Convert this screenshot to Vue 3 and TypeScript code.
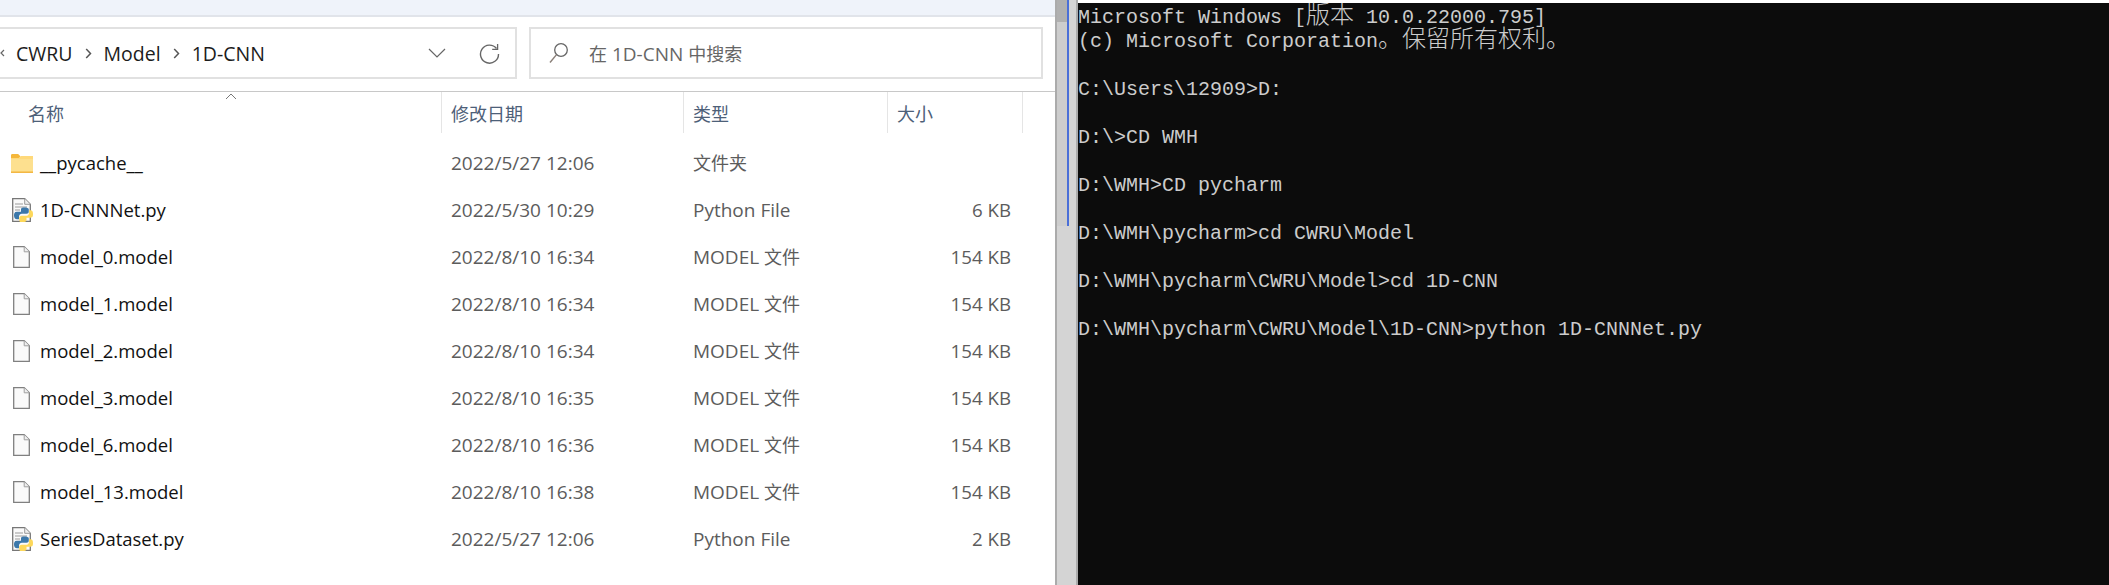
<script setup lang="ts">
interface Row { name: string; date: string; type: string; size: string; icon: 'folder' | 'py' | 'doc' }
const rows: Row[] = [
  { name: '__pycache__', date: '2022/5/27 12:06', type: '文件夹', size: '', icon: 'folder' },
  { name: '1D-CNNNet.py', date: '2022/5/30 10:29', type: 'Python File', size: '6 KB', icon: 'py' },
  { name: 'model_0.model', date: '2022/8/10 16:34', type: 'MODEL 文件', size: '154 KB', icon: 'doc' },
  { name: 'model_1.model', date: '2022/8/10 16:34', type: 'MODEL 文件', size: '154 KB', icon: 'doc' },
  { name: 'model_2.model', date: '2022/8/10 16:34', type: 'MODEL 文件', size: '154 KB', icon: 'doc' },
  { name: 'model_3.model', date: '2022/8/10 16:35', type: 'MODEL 文件', size: '154 KB', icon: 'doc' },
  { name: 'model_6.model', date: '2022/8/10 16:36', type: 'MODEL 文件', size: '154 KB', icon: 'doc' },
  { name: 'model_13.model', date: '2022/8/10 16:38', type: 'MODEL 文件', size: '154 KB', icon: 'doc' },
  { name: 'SeriesDataset.py', date: '2022/5/27 12:06', type: 'Python File', size: '2 KB', icon: 'py' },
]
const crumbs = ['CWRU', 'Model', '1D-CNN']
type Seg = { t: string; cjk?: boolean }
const term: Seg[][] = [
  [{ t: 'Microsoft Windows [' }, { t: '版本', cjk: true }, { t: ' 10.0.22000.795]' }],
  [{ t: '(c) Microsoft Corporation' }, { t: '。保留所有权利。', cjk: true }],
  [],
  [{ t: 'C:\\Users\\12909>D:' }],
  [],
  [{ t: 'D:\\>CD WMH' }],
  [],
  [{ t: 'D:\\WMH>CD pycharm' }],
  [],
  [{ t: 'D:\\WMH\\pycharm>cd CWRU\\Model' }],
  [],
  [{ t: 'D:\\WMH\\pycharm\\CWRU\\Model>cd 1D-CNN' }],
  [],
  [{ t: 'D:\\WMH\\pycharm\\CWRU\\Model\\1D-CNN>python 1D-CNNNet.py' }],
]
function parts(s: string): Seg[] {
  return (s.match(/[\u4e00-\u9fff]+|[^\u4e00-\u9fff]+/g) ?? []).map((t) => ({ t, cjk: /[\u4e00-\u9fff]/.test(t) }))
}
</script>

<template>
  <div class="page">
    <section class="explorer">
      <div class="strip"></div>
      <div class="toolbar">
        <div class="address">
          <svg class="back" width="5" height="8" viewBox="0 0 5 8"><path d="M4 1 1 4l3 3" fill="none" stroke="#666" stroke-width="1.2" /></svg>
          <template v-for="(c, i) in crumbs" :key="c">
            <span class="crumb">{{ c }}</span>
            <svg v-if="i < crumbs.length - 1" class="sep" width="7" height="11" viewBox="0 0 7 11"><path d="M1.2 1 5.5 5.5 1.2 10" fill="none" stroke="#555" stroke-width="1.5" /></svg>
          </template>
          <span class="grow"></span>
          <svg class="chev" width="18" height="10" viewBox="0 0 18 10"><path d="M1 1l8 8 8-8" fill="none" stroke="#666" stroke-width="1.2" /></svg>
          <svg class="refresh" width="21" height="21" viewBox="0 0 21 21"><path d="M17.5 5.5A9 9 0 1 0 19.5 11" fill="none" stroke="#666" stroke-width="1.4" /><path d="M18.6 1v5.4h-5.4" fill="none" stroke="#666" stroke-width="1.3" /></svg>
        </div>
        <div class="search">
          <svg width="20" height="22" viewBox="0 0 20 22"><circle cx="12" cy="8" r="6.3" fill="none" stroke="#666" stroke-width="1.3" /><path d="M7.5 12.6 1 20.5" fill="none" stroke="#8a7f78" stroke-width="1.4" /></svg>
          <span><span v-for="(p, k) in parts('在 1D-CNN 中搜索')" :key="k" :class="{ zh: p.cjk }">{{ p.t }}</span></span>
        </div>
      </div>
      <div class="header">
        <div class="hcell hname">名称
          <svg class="sort" width="12" height="7" viewBox="0 0 12 7"><path d="M1 6l5-5 5 5" fill="none" stroke="#777" stroke-width="1" /></svg>
        </div>
        <div class="hcell">修改日期</div>
        <div class="hcell">类型</div>
        <div class="hcell">大小</div>
      </div>
      <div class="rows">
        <div v-for="r in rows" :key="r.name" class="row">
          <div class="name">
            <span class="ico">
              <svg v-if="r.icon === 'folder'" width="22" height="20" viewBox="0 0 23 20" preserveAspectRatio="none">
                <path d="M0 2.5C0 1.5.5 1 1.5 1h6L10 3.5 8 6H0z" fill="#f5b73a" />
                <path d="M0 5h8l2.5-2H23v16.5H0z" fill="#ffd97a" />
                <path d="M0 6h23v12.5H0z" fill="#fde08f" />
                <path d="M0 18.5h23V20H0z" fill="#f3b744" />
              </svg>
              <svg v-else-if="r.icon === 'py'" width="21" height="24" viewBox="0 0 21 24">
                <path d="M.7.7h12l5.6 5.6v17H.7z" fill="#fafafa" stroke="#777" stroke-width="1.3" />
                <path d="M12.7.7v5.6h5.6" fill="#eee" stroke="#999" />
                <path d="M3 6h8M3 9h12M3 12h5M3 15h4M3 18h4" stroke="#9a9a9a" stroke-width="1" />
                <path d="M10 9.5c-3 0-3 1.3-3 3v1.3H2.9c-2.4 0-2.9 2-2.9 3.6 0 2.4 1 3.8 3 3.8h2v-2.6c0-1.8 1.3-2.9 3-2.9h4.5c1.4 0 2.3-1 2.3-2.3v-1.8c0-1.6-1.8-2.1-4.8-2.1z" transform="translate(2 0)" fill="#3c78aa" />
                <path d="M11.5 24c3 0 3-1.3 3-3v-1.3h4c2.4 0 2.5-2 2.5-3.6 0-2.4-.6-3.8-2.6-3.8H17v2.6c0 1.8-1.3 2.9-3 2.9H9.5c-1.4 0-2.3 1-2.3 2.3v1.8c0 1.6 1.3 3.1 4.3 3.1z" fill="#fdd85a" />
              </svg>
              <svg v-else class="docicon" width="17" height="22" viewBox="0 0 17 22">
                <path d="M.7.7h10.5l5.100 5.100v15.500H.7z" fill="#fafafa" stroke="#808080" stroke-width="1.3" />
                <path d="M11.2.7v5.100h5.100" fill="#eee" stroke="#a0a0a0" />
              </svg>
            </span>
            <span class="fname">{{ r.name }}</span>
          </div>
          <div class="cell">{{ r.date }}</div>
          <div class="cell type"><span v-for="(p, k) in parts(r.type)" :key="k" :class="{ zh: p.cjk }">{{ p.t }}</span></div>
          <div class="cell size">{{ r.size }}</div>
        </div>
      </div>
    </section>
    <aside class="track">
      <div class="thumb"></div>
    </aside>
    <section class="terminal">
      <div v-for="(line, i) in term" :key="i" class="line"><span v-for="(s, j) in line" :key="j" :class="{ cjk: s.cjk }">{{ s.t }}</span></div>
    </section>
  </div>
</template>

<style>
html, body { margin: 0; padding: 0; background: #fff; overflow: hidden; }
</style>

<style scoped>
.page {
  width: 2109px;
  height: 585px;
  display: grid;
  grid-template-columns: 1055px 23px 1fr;
  background: #fff;
  overflow: hidden;
}
.explorer {
  display: flex;
  flex-direction: column;
  font-family: "Open Sans", "Noto Sans CJK SC", sans-serif;
  font-size: 19px;
  overflow: hidden;
}
.zh { font-size: 18px; }
.strip {
  height: 15px;
  flex: none;
  background: #eff3fa;
  border-bottom: 2px solid #e1e4ea;
}
.toolbar {
  flex: none;
  height: 75px;
  display: flex;
  gap: 12px;
  padding: 10px 12px 12px 0;
  box-sizing: border-box;
  border-bottom: 1px solid #c8c8c8;
}
.address {
  width: 517px;
  box-sizing: border-box;
  display: flex;
  align-items: center;
  border: 2px solid #e1e1e1;
  border-left: none;
  color: #1c1c1c;
  font-size: 19.5px;
}
.back { margin-right: 11px; }
.sep { margin: 0 12px; }
.grow { flex: 1; }
.chev { margin-right: 33px; }
.refresh { margin-right: 15px; }
.search {
  width: 514px;
  box-sizing: border-box;
  display: flex;
  align-items: center;
  gap: 20px;
  padding-left: 18px;
  border: 2px solid #e1e1e1;
  color: #666;
}
.header {
  flex: none;
  height: 41px;
  display: grid;
  grid-template-columns: 442px 242px 204px 135px;
  color: #4d6078;
  font-size: 18px;
}
.hcell {
  position: relative;
  display: flex;
  align-items: center;
  padding-left: 9px;
  border-right: 1px solid #e5e5e5;
}
.hname { padding-left: 28px; }
.sort { position: absolute; left: 225px; top: 1px; }
.rows { padding-top: 6px; }
.row {
  height: 47px;
  display: grid;
  grid-template-columns: 442px 242px 204px 123px;
  align-items: center;
  color: #5c5c5c;
}
.name { display: flex; align-items: center; color: #111; font-size: 18.5px; }
.ico {
  width: 40px;
  height: 24px;
  flex: none;
  display: flex;
  align-items: center;
  justify-content: flex-end;
  padding-right: 7px;
  box-sizing: border-box;
}
.docicon { margin-right: 3px; }
.cell { padding-left: 9px; white-space: nowrap; }
.size { text-align: right; font-size: 18.7px; }
.track {
  position: relative;
  background: #d4d4d4;
  border-left: 2px solid #ababab;
  border-right: 2px solid #ababab;
}
.thumb {
  position: absolute;
  left: 0;
  top: 0;
  width: 10px;
  height: 226px;
  background: linear-gradient(#b0b0b0 0, #b0b0b0 22px, #cdcdcd 22px);
  border-right: 2px solid #4a6fd8;
}
.terminal {
  margin-top: 3px;
  padding-top: 3px;
  background: #0c0c0c;
  color: #cccccc;
  font-family: "Liberation Mono", "Noto Sans CJK SC", monospace;
  font-size: 20px;
  line-height: 24px;
  overflow: hidden;
}
.line { height: 24px; white-space: pre; }
.cjk { font-family: "Noto Sans CJK SC", sans-serif; font-size: 24px; font-weight: 300; line-height: 0; }
</style>
